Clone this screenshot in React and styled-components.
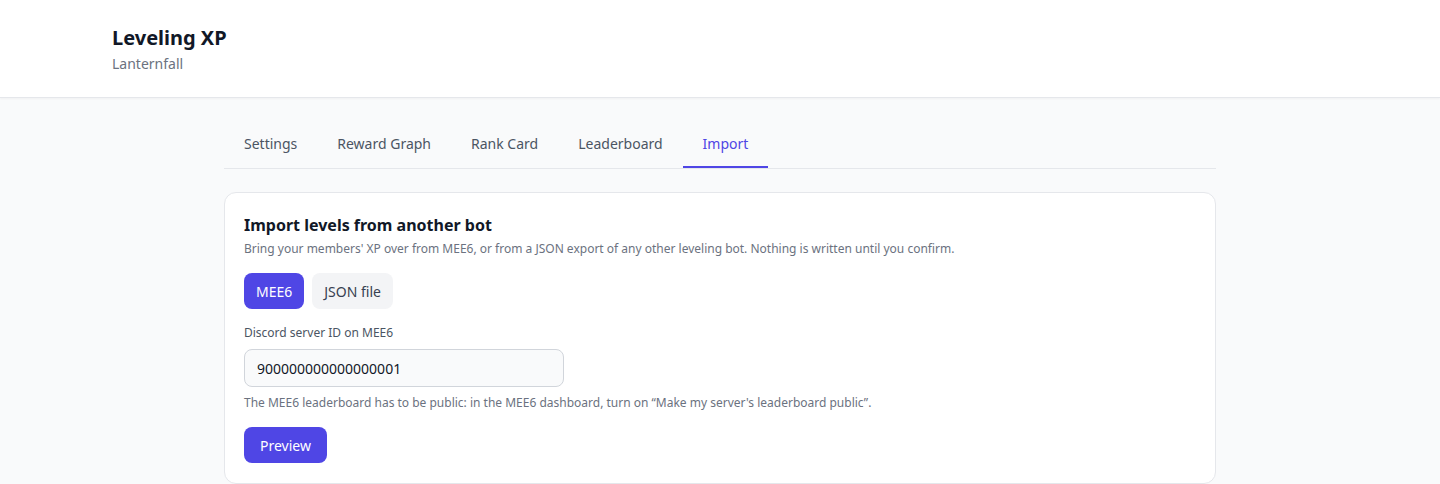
import React from "react";
import styled, { createGlobalStyle } from "styled-components";

const Global = createGlobalStyle`
  * { box-sizing: border-box; }
  html, body { margin: 0; padding: 0; }
  body {
    font-family: "Noto Sans", "Open Sans", sans-serif;
    background: #f9fafb;
    color: #111827;
  }
`;

const Header = styled.header`
  background: #ffffff;
  border-bottom: 1px solid #e5e7eb;
  box-shadow: 0 1px 2px rgba(0, 0, 0, 0.04);
`;

const HeaderInner = styled.div`
  max-width: 1216px;
  margin: 0 auto;
  padding: 24px 0 23px;
`;

const Title = styled.h1`
  margin: 0;
  font-size: 20px;
  line-height: 28px;
  font-weight: 700;
  color: #111827;
`;

const Subtitle = styled.div`
  font-size: 14px;
  line-height: 20px;
  color: #6b7280;
  margin-top: 2px;
`;

const Main = styled.main`
  max-width: 992px;
  margin: 0 auto;
  padding-top: 24px;
`;

const Tabs = styled.nav`
  display: flex;
  border-bottom: 1px solid #e5e7eb;
`;

const Tab = styled.button`
  font-family: inherit;
  background: none;
  border: none;
  border-bottom: 2px solid ${(p) => (p.$active ? "#4f46e5" : "transparent")};
  padding: 12px 20px;
  font-size: 14px;
  line-height: 20px;
  color: ${(p) => (p.$active ? "#4f46e5" : "#4b5563")};
  cursor: pointer;
`;

const Card = styled.section`
  margin-top: 23px;
  background: #ffffff;
  border: 1px solid #e5e7eb;
  border-radius: 12px;
  padding: 20px 19px 20px;
`;

const CardTitle = styled.h2`
  margin: 0;
  font-size: 16px;
  line-height: 24px;
  font-weight: 700;
  color: #111827;
`;

const Desc = styled.p`
  margin: 4px 0 0;
  font-size: 12px;
  line-height: 16px;
  color: #6b7280;
`;

const Segments = styled.div`
  display: flex;
  gap: 8px;
  margin-top: 16px;
`;

const Segment = styled.button`
  font-family: inherit;
  height: 36px;
  padding: 0 12px;
  border: none;
  border-radius: 8px;
  font-size: 14px;
  background: ${(p) => (p.$active ? "#4f46e5" : "#f3f4f6")};
  color: ${(p) => (p.$active ? "#ffffff" : "#374151")};
  cursor: pointer;
`;

const Label = styled.label`
  display: block;
  margin-top: 16px;
  font-size: 12px;
  line-height: 16px;
  color: #4b5563;
`;

const Input = styled.input`
  display: block;
  margin-top: 8px;
  width: 320px;
  height: 38px;
  padding: 0 12px;
  font-family: inherit;
  font-size: 14px;
  color: #111827;
  background: #f9fafb;
  border: 1px solid #d1d5db;
  border-radius: 8px;
  outline: none;
`;

const Help = styled.p`
  margin: 8px 0 0;
  font-size: 12px;
  line-height: 16px;
  color: #6b7280;
`;

const PrimaryButton = styled.button`
  font-family: inherit;
  margin-top: 16px;
  height: 36px;
  padding: 0 16px;
  border: none;
  border-radius: 8px;
  background: #4f46e5;
  color: #ffffff;
  font-size: 14px;
  cursor: pointer;
`;

const tabs = ["Settings", "Reward Graph", "Rank Card", "Leaderboard", "Import"];

export default function App() {
  return (
    <>
      <Global />
      <Header>
        <HeaderInner>
          <Title>Leveling XP</Title>
          <Subtitle>Lanternfall</Subtitle>
        </HeaderInner>
      </Header>
      <Main>
        <Tabs>
          {tabs.map((t) => (
            <Tab key={t} $active={t === "Import"}>
              {t}
            </Tab>
          ))}
        </Tabs>
        <Card>
          <CardTitle>Import levels from another bot</CardTitle>
          <Desc>
            Bring your members' XP over from MEE6, or from a JSON export of any other leveling bot. Nothing is written until you confirm.
          </Desc>
          <Segments>
            <Segment $active>MEE6</Segment>
            <Segment>JSON file</Segment>
          </Segments>
          <Label>Discord server ID on MEE6</Label>
          <Input defaultValue="900000000000000001" />
          <Help>
            The MEE6 leaderboard has to be public: in the MEE6 dashboard, turn on “Make my server's leaderboard public”.
          </Help>
          <PrimaryButton>Preview</PrimaryButton>
        </Card>
      </Main>
    </>
  );
}
